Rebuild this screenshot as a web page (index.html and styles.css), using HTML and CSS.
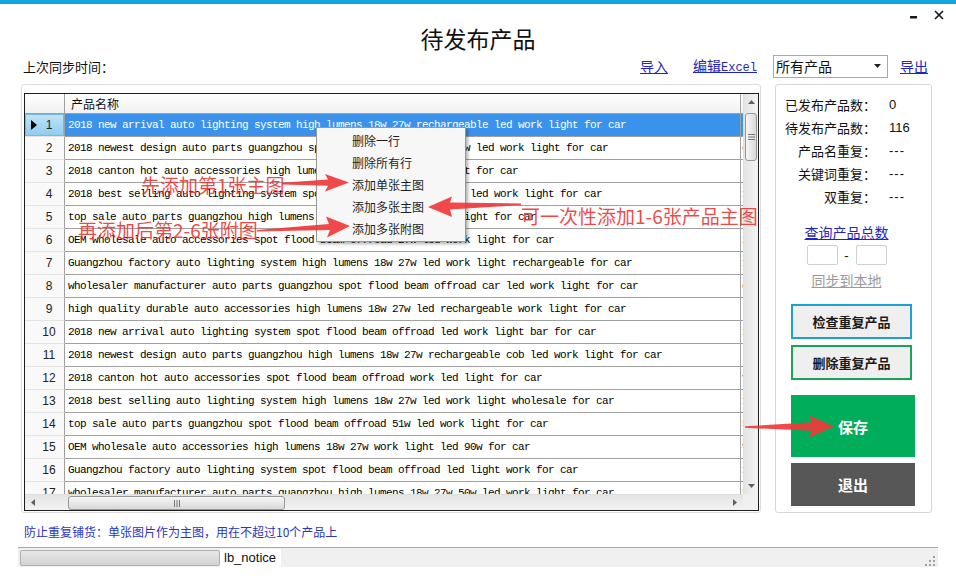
FILE: index.html
```html
<!DOCTYPE html>
<html lang="zh-CN">
<head>
<meta charset="utf-8">
<title>待发布产品</title>
<link rel="stylesheet" href="styles.css">
</head>
<body>
<div class="window">
  <div class="accent"></div>
  <header class="titlebar">
    <h1 class="title">待发布产品</h1>
    <div class="winctl">
      <svg class="ctl-min" width="7" height="3" viewBox="0 0 7 3"><rect x="0" y="0" width="7" height="2.5" fill="#1a1a1a"/></svg>
      <svg class="ctl-close" width="10" height="10" viewBox="0 0 10 10"><path d="M1 1L9 9M9 1L1 9" stroke="#1a1a1a" stroke-width="1.7"/></svg>
    </div>
  </header>

  <div class="toolbar">
    <span class="sync-label">上次同步时间：</span>
    <a class="link link-import">导入</a>
    <a class="link link-excel">编辑<span class="mono">Excel</span></a>
    <div class="select"><span>所有产品</span><svg width="7" height="4" viewBox="0 0 7 4"><path d="M0 0H7L3.5 4Z" fill="#222"/></svg></div>
    <a class="link link-export">导出</a>
  </div>

  <div class="main">
    <div class="gridbox">
      <div class="grid">
        <div class="viewport">
          <div class="row head"><div class="rh"></div><div class="cell">产品名称</div><div class="cx"></div></div>
          <div class="row sel"><div class="rh"><span class="ptr"></span><span class="num">1</span></div><div class="cell">2018 new arrival auto lighting system high lumens 18w 27w rechargeable led work light for car</div><div class="cx">1</div></div>
          <div class="row"><div class="rh"><span class="ptr"></span><span class="num">2</span></div><div class="cell">2018 newest design auto parts guangzhou spot flood beam offroad 18w led work light for car</div><div class="cx">c</div></div>
          <div class="row"><div class="rh"><span class="ptr"></span><span class="num">3</span></div><div class="cell">2018 canton hot auto accessories high lumens 18w 27w led work light for car</div><div class="cx">:</div></div>
          <div class="row"><div class="rh"><span class="ptr"></span><span class="num">4</span></div><div class="cell">2018 best selling auto lighting system spot flood beam offroad 27w led work light for car</div><div class="cx">1</div></div>
          <div class="row"><div class="rh"><span class="ptr"></span><span class="num">5</span></div><div class="cell">top sale auto parts guangzhou high lumens 18w 27w flood led work light for car</div><div class="cx">:</div></div>
          <div class="row"><div class="rh"><span class="ptr"></span><span class="num">6</span></div><div class="cell">OEM wholesale auto accessories spot flood beam offroad 27w led work light for car</div><div class="cx">2</div></div>
          <div class="row"><div class="rh"><span class="ptr"></span><span class="num">7</span></div><div class="cell">Guangzhou factory auto lighting system high lumens 18w 27w led work light rechargeable for car</div><div class="cx">1</div></div>
          <div class="row"><div class="rh"><span class="ptr"></span><span class="num">8</span></div><div class="cell">wholesaler manufacturer auto parts guangzhou spot flood beam offroad car led work light for car</div><div class="cx">c</div></div>
          <div class="row"><div class="rh"><span class="ptr"></span><span class="num">9</span></div><div class="cell">high quality durable auto accessories high lumens 18w 27w led rechargeable work light for car</div><div class="cx">:</div></div>
          <div class="row"><div class="rh"><span class="ptr"></span><span class="num">10</span></div><div class="cell">2018 new arrival auto lighting system spot flood beam offroad led work light bar for car</div><div class="cx">1</div></div>
          <div class="row"><div class="rh"><span class="ptr"></span><span class="num">11</span></div><div class="cell">2018 newest design auto parts guangzhou high lumens 18w 27w rechargeable cob led work light for car</div><div class="cx">:</div></div>
          <div class="row"><div class="rh"><span class="ptr"></span><span class="num">12</span></div><div class="cell">2018 canton hot auto accessories spot flood beam offroad work led light for car</div><div class="cx">v</div></div>
          <div class="row"><div class="rh"><span class="ptr"></span><span class="num">13</span></div><div class="cell">2018 best selling auto lighting system high lumens 18w 27w led work light wholesale for car</div><div class="cx">1</div></div>
          <div class="row"><div class="rh"><span class="ptr"></span><span class="num">14</span></div><div class="cell">top sale auto parts guangzhou spot flood beam offroad 51w led work light for car</div><div class="cx">5</div></div>
          <div class="row"><div class="rh"><span class="ptr"></span><span class="num">15</span></div><div class="cell">OEM wholesale auto accessories high lumens 18w 27w work light led 90w for car</div><div class="cx">v</div></div>
          <div class="row"><div class="rh"><span class="ptr"></span><span class="num">16</span></div><div class="cell">Guangzhou factory auto lighting system spot flood beam offroad led light work for car</div><div class="cx">1</div></div>
          <div class="row"><div class="rh"><span class="ptr"></span><span class="num">17</span></div><div class="cell">wholesaler manufacturer auto parts guangzhou high lumens 18w 27w 50w led work light for car</div><div class="cx">5</div></div>
        </div>
        <div class="vscroll">
          <div class="sb-btn"><svg width="7" height="4" viewBox="0 0 7 4"><path d="M0 4H7L3.5 0Z" fill="#606060"/></svg></div>
          <div class="vtrack"><div class="vthumb"><svg width="7" height="6" viewBox="0 0 7 6"><path d="M0 .5H7M0 3H7M0 5.5H7" stroke="#777" stroke-width="1"/></svg></div></div>
          <div class="sb-btn"><svg width="7" height="4" viewBox="0 0 7 4"><path d="M0 0H7L3.5 4Z" fill="#606060"/></svg></div>
        </div>
        <div class="hscroll">
          <div class="sb-btn"><svg width="4" height="7" viewBox="0 0 4 7"><path d="M4 0V7L0 3.5Z" fill="#606060"/></svg></div>
          <div class="htrack"><div class="hthumb"><svg width="6" height="7" viewBox="0 0 6 7"><path d="M.5 0V7M3 0V7M5.5 0V7" stroke="#777" stroke-width="1"/></svg></div></div>
          <div class="sb-btn"><svg width="4" height="7" viewBox="0 0 4 7"><path d="M0 0V7L4 3.5Z" fill="#606060"/></svg></div>
        </div>
        <div class="corner"></div>
      </div>
    </div>

    <aside class="panel">
      <dl class="stats">
        <dt>已发布产品数：</dt><dd>0</dd>
        <dt>待发布产品数：</dt><dd>116</dd>
        <dt>产品名重复：</dt><dd class="dashes">---</dd>
        <dt>关键词重复：</dt><dd class="dashes">---</dd>
        <dt>双重复：</dt><dd class="dashes">---</dd>
      </dl>
      <div class="sync-block">
        <a class="link query">查询产品总数</a>
        <div class="range"><span class="box"></span><span class="dash">-</span><span class="box"></span></div>
        <a class="disabled-link">同步到本地</a>
      </div>
      <div class="actions">
        <button class="btn btn-check">检查重复产品</button>
        <button class="btn btn-del">删除重复产品</button>
        <button class="btn btn-save">保存</button>
        <button class="btn btn-exit">退出</button>
      </div>
    </aside>
  </div>

  <p class="notice">防止重复铺货：单张图片作为主图，用在不超过10个产品上</p>

  <div class="statusbar">
    <div class="progress"></div>
    <span class="lb">lb_notice</span>
    <svg class="grip" width="10" height="10" viewBox="0 0 10 10"><g fill="#a0a0a0"><rect x="8" y="0" width="2" height="2"/><rect x="4" y="4" width="2" height="2"/><rect x="8" y="4" width="2" height="2"/><rect x="0" y="8" width="2" height="2"/><rect x="4" y="8" width="2" height="2"/><rect x="8" y="8" width="2" height="2"/></g></svg>
  </div>

  <ul class="ctxmenu">
    <li>删除一行</li>
    <li>删除所有行</li>
    <li>添加单张主图</li>
    <li>添加多张主图</li>
    <li>添加多张附图</li>
  </ul>

  <svg class="arrows" width="956" height="587" viewBox="0 0 956 587">
    <g fill="#f03a3a" fill-opacity="0.92">
      <polygon points="282,182.8 328,179.6 325,174 349,182.5 325,191.5 328,185.8 282,184.6"/>
      <polygon points="257,230 329,224 326,216.5 350,226 327,237.5 330,230 257,231.6"/>
      <polygon points="521,203.4 450,202.5 452,196.5 428,207 452,217 450,209.5 521,205"/>
      <polygon points="745,426.3 812,422.2 809,415.5 834,426.5 809,437.5 812,430.8 745,427.8"/>
    </g>
  </svg>
  <div class="note note-1">先添加第1张主图</div>
  <div class="note note-2">再添加后第2-6张附图</div>
  <div class="note note-3">可一次性添加1-6张产品主图</div>
</div>
</body>
</html>
```
FILE: styles.css
```css
* { box-sizing: border-box; }
html, body { margin: 0; padding: 0; background: #fff; }
body { font-family: "Noto Sans CJK SC", "Liberation Sans", sans-serif; color: #111; }

.window { position: relative; width: 956px; height: 587px; overflow: hidden; background: #fff; }
.accent { height: 4px; background: #12a6da; }

.titlebar { height: 48px; display: grid; grid-template-columns: 1fr auto 1fr; align-items: start; }
.title { grid-column: 2; margin: 22px 0 0; font-size: 23px; line-height: 24px; font-weight: 400; color: #111; }
.winctl { grid-column: 3; justify-self: end; display: flex; align-items: flex-start; gap: 17px; padding: 6px 12px 0 0; }
.ctl-min { margin-top: 6px; }

.toolbar { display: flex; align-items: center; height: 24px; margin-top: 2px; padding: 0 28px 0 23px; }
.sync-label { font-size: 13px; margin-right: auto; }
.link { color: #1f25c0; text-decoration: underline; font-size: 14px; line-height: 18px; cursor: pointer; }
.link-import { margin-right: 25px; }
.link-excel { margin-right: 16px; }
.mono { font-family: "Liberation Mono", monospace; font-size: 12px; }
.select { width: 115px; height: 23px; border: 1px solid #a8a8a8; display: flex; align-items: center; justify-content: space-between; padding: 0 6px 0 2px; font-size: 14px; margin-right: 12px; background: #fff; }

.main { display: flex; gap: 14px; margin-top: 6px; padding-left: 21px; height: 429px; }
.gridbox { width: 740px; height: 429px; border: 1px solid #dcdcdc; border-radius: 3px; padding: 8px 1px 1px 2px; }
.grid { height: 418px; border: 1px solid #1c1c1c; display: grid; grid-template-columns: 1fr 15px; grid-template-rows: 1fr 16px; background: #fff; }
.viewport { overflow: hidden; }

.row { display: flex; height: 23px; }
.row.head { height: 20px; }
.rh { flex: 0 0 40px; display: flex; align-items: center; border-right: 1px solid #a0a0a0; border-bottom: 1px solid #e4e4e4; background: #f9f9f9; font: 12px "Liberation Sans", sans-serif; color: #222; }
.ptr { width: 6px; height: 10px; margin-left: 6px; }
.num { flex: 1; text-align: center; padding-right: 3px; }
.cell { flex: 0 0 676px; border-right: 1px solid #a0a0a0; border-bottom: 1px solid #a0a0a0; padding-left: 3px; font-family: "Liberation Mono", monospace; font-size: 11px; letter-spacing: -0.6px; line-height: 22px; white-space: nowrap; overflow: hidden; color: #000; }
.cx { flex: 0 0 30px; border-bottom: 1px solid #a0a0a0; padding-left: 1px; font: 11px/22px "Liberation Mono", monospace; overflow: hidden; white-space: nowrap; }
.head .rh, .head .cell, .head .cx { background: linear-gradient(#ffffff, #f1f1f1); border-bottom-color: #a0a0a0; }
.head .cell { font-family: "Noto Sans CJK SC", sans-serif; font-size: 12px; letter-spacing: 0; line-height: 19px; padding-left: 6px; color: #111; }
.sel .cell, .sel .cx { background: #3b92ea; color: #fff; }
.sel .rh { background: linear-gradient(#c2e5f9, #8dcbef); box-shadow: inset 0 0 0 1px #78b9e2; }
.sel .ptr { width: 0; border-left: 6px solid #000; border-top: 5px solid transparent; border-bottom: 5px solid transparent; }

.vscroll { display: flex; flex-direction: column; background: linear-gradient(to right, #e4e4e4, #f3f3f3); border-left: 1px solid #dedede; }
.sb-btn { flex: 0 0 16px; display: flex; align-items: center; justify-content: center; }
.vtrack { flex: 1; }
.vthumb { margin: 3px 1px 0 1px; height: 48px; border: 1px solid #979797; border-radius: 3px; background: linear-gradient(to right, #f6f6f6, #d8d8d8); display: flex; align-items: center; justify-content: center; }
.hscroll { display: flex; background: linear-gradient(#e4e4e4, #f3f3f3); border-top: 1px solid #dedede; }
.htrack { flex: 1; }
.hthumb { margin: 1px 0 0 27px; width: 217px; height: 14px; border: 1px solid #979797; border-radius: 3px; background: linear-gradient(#f6f6f6, #d8d8d8); display: flex; align-items: center; justify-content: center; }
.corner { background: #f0f0f0; }

.panel { width: 157px; height: 429px; border: 1px solid #d8d8d8; border-radius: 3px; padding: 8px 0 0 7px; font-size: 13px; }
.stats { display: grid; grid-template-columns: 93px 1fr; column-gap: 13px; margin: 0; line-height: 23px; }
.stats dt { text-align: right; }
.stats dd { margin: 0; font-family: "Liberation Sans", sans-serif; font-size: 13px; }
.stats .dashes { letter-spacing: 1px; }
.sync-block { display: flex; flex-direction: column; align-items: center; padding-right: 21px; margin-top: 15px; }
.query { font-size: 14px; line-height: 18px; }
.range { display: flex; align-items: center; margin-top: 4px; height: 20px; }
.box { width: 31px; height: 20px; border: 1px solid #d0d0d0; border-radius: 2px; background: #fff; }
.dash { width: 18px; text-align: center; font: 13px "Liberation Sans", sans-serif; }
.disabled-link { color: #9a9a9a; text-decoration: underline; font-size: 14px; line-height: 18px; margin-top: 6px; }

.actions { display: flex; flex-direction: column; align-items: flex-start; padding-left: 8px; margin-top: 15px; }
.btn { font-family: "Noto Sans CJK SC", sans-serif; font-weight: 700; font-size: 13px; padding: 0; margin: 0; cursor: pointer; color: #1a1a1a; }
.btn-check { width: 121px; height: 35px; border: 2px solid #1aa3d1; background: #efefef; }
.btn-del { width: 121px; height: 35px; border: 2px solid #19a35b; background: #efefef; margin-top: 6px; }
.btn-save { width: 124px; height: 62px; border: none; background: #00ad5a; color: #fff; font-size: 15px; margin-top: 15px; }
.btn-exit { width: 124px; height: 43px; border: none; background: #575757; color: #fff; font-size: 15px; margin-top: 6px; }

.notice { margin: 11px 0 0 24px; font-size: 12px; line-height: 16px; color: #2a35c4; }

.statusbar { margin: 7px 18px 0; height: 20px; border-top: 1px solid #a8a8a8; background: #f0f0f0; display: flex; align-items: center; padding: 0 3px 0 2px; }
.progress { width: 200px; height: 16px; border: 1px solid #b0b0b0; border-radius: 2px; background: linear-gradient(#e8e8e8, #d3d3d3); }
.lb { background: #fff; font: 13px/18px "Liberation Sans", sans-serif; padding: 0 5px 0 4px; color: #111; }
.grip { margin-left: auto; margin-top: 6px; }

.ctxmenu { position: absolute; left: 316px; top: 127px; width: 150px; height: 115px; margin: 0; padding: 2px 0; list-style: none; border: 1px solid #979797; background: #f7f7f7; box-shadow: 2px 2px 3px rgba(0,0,0,0.3); }
.ctxmenu li { height: 22px; line-height: 22px; padding-left: 35px; font-size: 12px; color: #1e1e1e; }

.arrows { position: absolute; left: 0; top: 0; pointer-events: none; }
.note { position: absolute; font-size: 19px; line-height: 20px; color: rgba(236, 48, 48, 0.88); white-space: nowrap; }
.note-1 { left: 141px; top: 175px; }
.note-2 { left: 78px; top: 220px; }
.note-3 { left: 521px; top: 206px; }
```
